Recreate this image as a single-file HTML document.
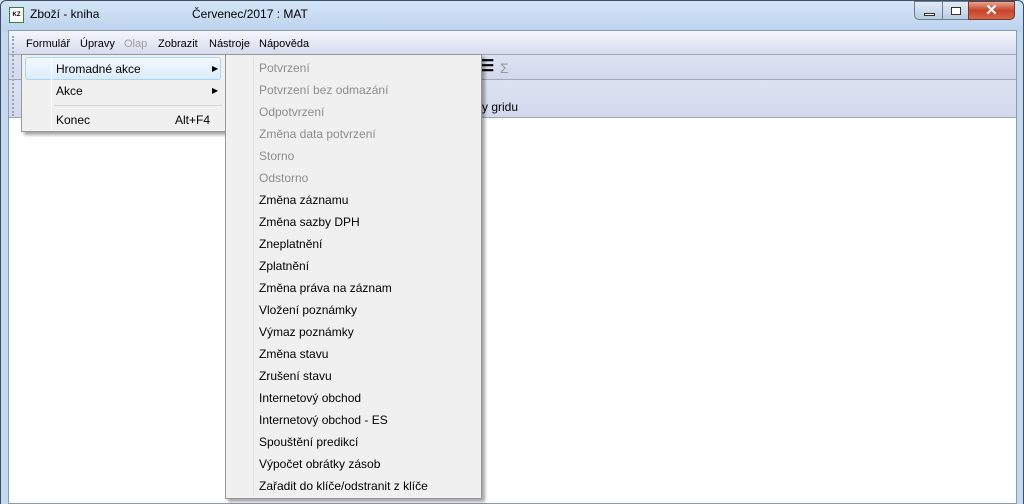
<!DOCTYPE html>
<html><head><meta charset="utf-8"><style>
*{margin:0;padding:0;box-sizing:border-box}
body{width:1024px;height:504px;overflow:hidden;background:#c5d9ef;font-family:"Liberation Sans",sans-serif;font-size:12px;position:relative}
.abs{position:absolute}
.title{left:0;top:0;width:1024px;height:32px;background:linear-gradient(#d5e5f6,#bcd3ee);}
.frame{left:0;top:0;width:1024px;height:504px;border-left:1px solid #3b4f66;border-right:1px solid #3b4f66;border-top:1px solid #3b4f66;border-radius:6px 6px 0 0}
.client{left:8px;top:30px;width:1009px;height:474px;background:#fff;border:1px solid #8a9bb0}
.band{left:9px;width:1007px;background:linear-gradient(#dde2f2,#d3d9ed);border-bottom:1px solid #a0a8b8}
.menu{position:absolute;background:#f0f0f0;border:1px solid #979797;box-shadow:3px 3px 3px rgba(0,0,0,.35)}
.it{position:absolute;height:22px;line-height:22px;white-space:nowrap}
.dis{color:#8d8d8d}
.mb{position:absolute;top:38px;font-size:11px}
</style></head><body>
<div class="abs title"></div>
<div class="abs frame"></div>
<div class="abs" style="left:9px;top:7px;width:15px;height:16px;background:#fff;border:1px solid #2a8a3a;font-size:6px;font-weight:bold;line-height:14px;text-align:center">KZ</div>
<div class="abs" style="left:30px;top:7px;font-size:12px">Zboží - kniha</div>
<div class="abs" style="left:192px;top:7px;font-size:12px">Červenec/2017 : MAT</div>
<div class="abs" style="left:914px;top:1px;width:29px;height:19px;border:1px solid #6d7d92;border-radius:0 0 0 5px;background:linear-gradient(#e2ebf6,#b9cbe1)"><div class="abs" style="left:9px;top:11px;width:11px;height:3px;border:1px solid #333;background:#fff"></div></div>
<div class="abs" style="left:942px;top:1px;width:27px;height:19px;border:1px solid #6d7d92;background:linear-gradient(#e2ebf6,#b9cbe1)"><div class="abs" style="left:8px;top:5px;width:10px;height:8px;border:1px solid #333;background:#fff"></div></div>
<div class="abs" style="left:968px;top:1px;width:47px;height:19px;border:1px solid #6d3a30;border-radius:0 0 5px 0;background:linear-gradient(#e8a493,#c7432a 50%,#d6664c);color:#fff;font-weight:bold;font-size:15px;text-align:center;line-height:17px">✕</div>
<div class="abs client"></div>
<div class="abs band" style="top:31px;height:24px;background:linear-gradient(#f4f6fb,#d6dcee)"></div>
<div class="abs band" style="top:55px;height:25px"></div>
<div class="abs band" style="top:80px;height:38px"></div>
<div class="abs" style="left:12px;top:36px;width:2px;height:80px;border-left:2px dotted #9aa3b8"></div>
<div class="mb" style="left:26px">Formulář</div>
<div class="mb" style="left:80px">Úpravy</div>
<div class="mb" style="left:124px;color:#a0a0a0">Olap</div>
<div class="mb" style="left:158px">Zobrazit</div>
<div class="mb" style="left:209px">Nástroje</div>
<div class="mb" style="left:259px">Nápověda</div>
<div class="abs" style="left:480px;top:60px;font-size:16px;line-height:14px;font-weight:bold">☰</div>
<div class="abs" style="left:500px;top:60px;color:#999;font-size:14px">Σ</div>
<div class="abs" style="left:482px;top:100px">y gridu</div>

<div class="menu" style="left:21px;top:54px;width:205px;height:78px">
<div class="abs" style="left:3px;top:2px;width:196px;height:23px;border:1px solid #a8d8f5;border-radius:3px;background:linear-gradient(#f2f8fd,#dcecfc)"></div>
<div class="abs" style="left:29px;top:3px;width:1px;height:72px;background:#e0e0e0;border-right:1px solid #fff"></div>
<div class="it" style="left:34px;top:3px">Hromadné akce</div><div class="it" style="left:190px;top:3px;font-size:8px">▶</div>
<div class="it" style="left:34px;top:25px">Akce</div><div class="it" style="left:190px;top:25px;font-size:8px">▶</div>
<div class="abs" style="left:32px;top:50px;width:168px;height:1px;background:#d5d5d5"></div>
<div class="it" style="left:34px;top:54px">Konec</div><div class="it" style="left:153px;top:54px">Alt+F4</div>
</div>

<div class="menu" style="left:225px;top:54px;width:257px;height:445px">
<div class="abs" style="left:27px;top:2px;width:1px;height:439px;background:#e0e0e0"></div>
<div class="it dis" style="left:33px;top:2px">Potvrzení</div>
<div class="it dis" style="left:33px;top:24px">Potvrzení bez odmazání</div>
<div class="it dis" style="left:33px;top:46px">Odpotvrzení</div>
<div class="it dis" style="left:33px;top:68px">Změna data potvrzení</div>
<div class="it dis" style="left:33px;top:90px">Storno</div>
<div class="it dis" style="left:33px;top:112px">Odstorno</div>
<div class="it" style="left:33px;top:134px">Změna záznamu</div>
<div class="it" style="left:33px;top:156px">Změna sazby DPH</div>
<div class="it" style="left:33px;top:178px">Zneplatnění</div>
<div class="it" style="left:33px;top:200px">Zplatnění</div>
<div class="it" style="left:33px;top:222px">Změna práva na záznam</div>
<div class="it" style="left:33px;top:244px">Vložení poznámky</div>
<div class="it" style="left:33px;top:266px">Výmaz poznámky</div>
<div class="it" style="left:33px;top:288px">Změna stavu</div>
<div class="it" style="left:33px;top:310px">Zrušení stavu</div>
<div class="it" style="left:33px;top:332px">Internetový obchod</div>
<div class="it" style="left:33px;top:354px">Internetový obchod - ES</div>
<div class="it" style="left:33px;top:376px">Spouštění predikcí</div>
<div class="it" style="left:33px;top:398px">Výpočet obrátky zásob</div>
<div class="it" style="left:33px;top:420px">Zařadit do klíče/odstranit z klíče</div>
</div>
</body></html>
